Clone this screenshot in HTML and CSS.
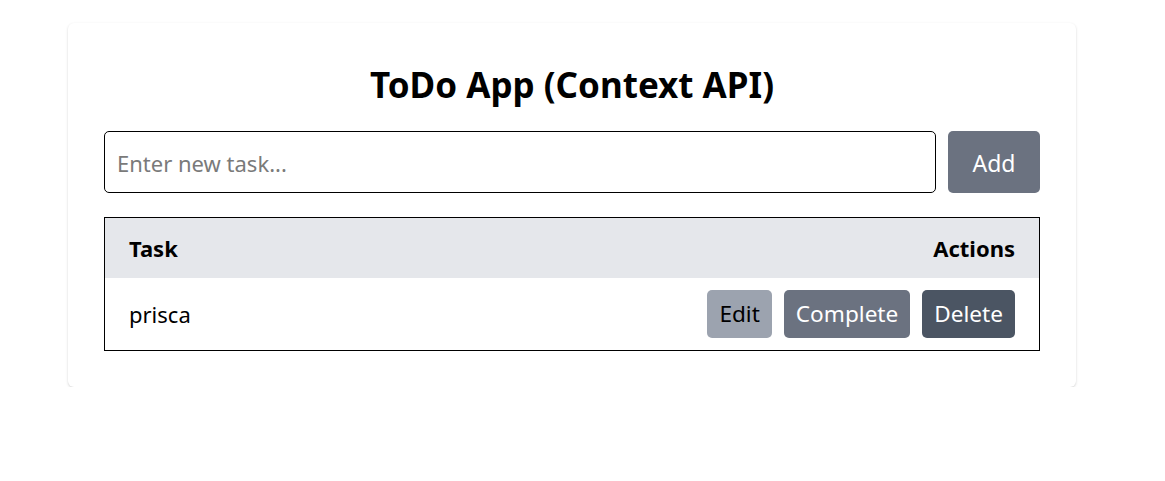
FILE: index.html
```html
<!DOCTYPE html>
<html lang="en">
<head>
<meta charset="utf-8">
<title>ToDo App (Context API)</title>
<link rel="stylesheet" href="styles.css">
</head>
<body>
<div class="page">
  <div class="card">
    <h1 class="title">ToDo App (Context API)</h1>
    <div class="add-row">
      <input class="task-input" type="text" placeholder="Enter new task...">
      <button class="btn btn-add">Add</button>
    </div>
    <table class="table">
      <thead>
        <tr class="head-row">
          <th class="col-task">Task</th>
          <th class="col-actions">Actions</th>
        </tr>
      </thead>
      <tbody>
        <tr class="body-row">
          <td class="col-task">prisca</td>
          <td class="col-actions">
            <div class="actions">
              <button class="btn btn-edit">Edit</button>
              <button class="btn btn-complete">Complete</button>
              <button class="btn btn-delete">Delete</button>
            </div>
          </td>
        </tr>
      </tbody>
    </table>
  </div>
</div>
</body>
</html>
```

FILE: styles.css
```css
* { box-sizing: border-box; }
html, body { margin: 0; padding: 0; background: #ffffff; }
body {
  font-family: "Noto Sans", "Open Sans", sans-serif;
  color: #000;
}
.page {
  padding: 23px 0 0 68px;
}
.card {
  width: 1008px;
  background: #fff;
  border-radius: 6px;
  box-shadow: 0 1px 3px rgba(0,0,0,0.12), 0 1px 2px rgba(0,0,0,0.06);
  padding: 38px 36px 36px;
}
.title {
  margin: 0 0 22px;
  text-align: center;
  font-size: 35px;
  line-height: 48px;
  font-weight: 700;
}
.add-row {
  display: flex;
  gap: 12px;
  margin-bottom: 24px;
}
.task-input {
  flex: 1;
  height: 62px;
  border: 1px solid #000;
  border-radius: 5px;
  padding: 2px 12px 0;
  font-family: inherit;
  font-size: 22px;
  color: #000;
  outline: none;
}
.task-input::placeholder { color: #7a7a7a; }
.btn {
  border: none;
  border-radius: 5px;
  font-family: inherit;
  font-size: 22px;
  cursor: pointer;
}
.btn-add {
  width: 92px;
  height: 62px;
  padding-top: 2px;
  background: #6b7280;
  color: #fff;
  font-size: 23px;
}
.table {
  width: 100%;
  border-collapse: collapse;
  border: 1px solid #000;
}
.head-row { background: #e5e7eb; }
.head-row th {
  height: 60px;
  padding: 0 24px;
  font-size: 22px;
  font-weight: 700;
}
.body-row td {
  height: 73px;
  padding: 0 24px;
  font-size: 22px;
}
.col-task { text-align: left; }
.col-actions { text-align: right; }
.actions {
  display: flex;
  justify-content: flex-end;
  gap: 12px;
}
.actions .btn {
  height: 48px;
  padding: 0 12px;
  font-size: 22.6px;
}
.btn-edit { background: #9ca3af; color: #000; }
.btn-complete { background: #6b7280; color: #fff; }
.btn-delete { background: #4b5563; color: #fff; }
```
